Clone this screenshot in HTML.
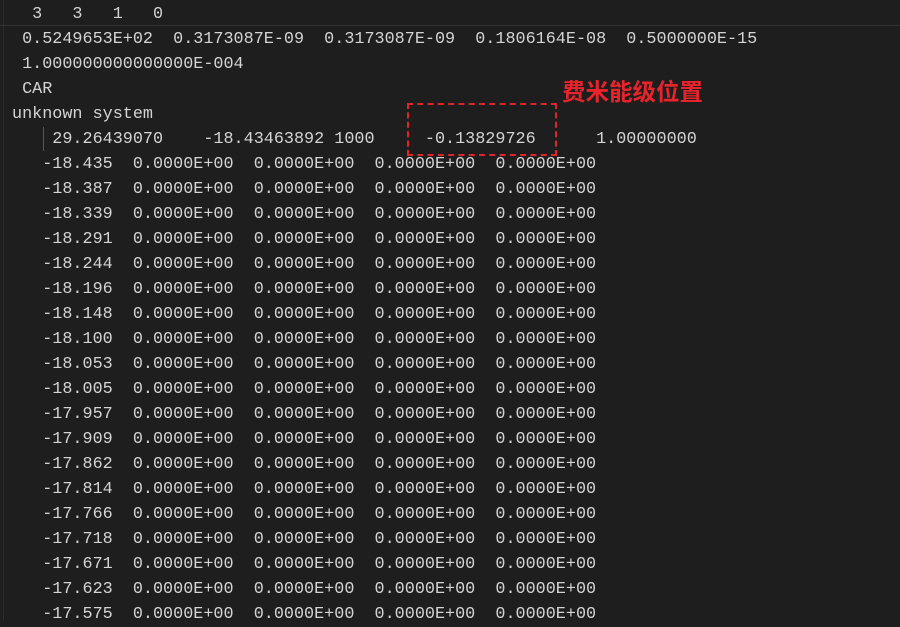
<!DOCTYPE html>
<html><head><meta charset="utf-8">
<style>
html,body{margin:0;padding:0;background:#1e1e1e;width:900px;height:620px;overflow:hidden;}
pre{position:absolute;left:12px;top:2px;margin:0;font-family:"Liberation Mono","DejaVu Sans Mono",monospace;font-size:16.8px;line-height:25px;color:#d4d4d4;white-space:pre;}
.sep{position:absolute;left:0;top:25px;width:900px;height:1px;background:#333;}
.lb{position:absolute;left:3px;top:0;width:1px;height:620px;background:#2c2c2c;}
.guide{position:absolute;left:43px;top:127px;width:1px;height:24px;background:#555;}
.box{position:absolute;left:407px;top:103px;width:146px;height:49px;border:2.5px dashed #e0242c;}
.lab{position:absolute;left:562px;top:78px;font-family:"Liberation Sans","Noto Sans CJK SC",sans-serif;font-weight:bold;font-size:23.5px;color:#e8232b;line-height:28px;}
</style></head><body>
<div class="lb"></div>
<div class="sep"></div>
<div class="guide"></div>
<pre>  3   3   1   0
 0.5249653E+02  0.3173087E-09  0.3173087E-09  0.1806164E-08  0.5000000E-15
 1.000000000000000E-004
 CAR
unknown system
    29.26439070    -18.43463892 1000     -0.13829726      1.00000000
   -18.435  0.0000E+00  0.0000E+00  0.0000E+00  0.0000E+00
   -18.387  0.0000E+00  0.0000E+00  0.0000E+00  0.0000E+00
   -18.339  0.0000E+00  0.0000E+00  0.0000E+00  0.0000E+00
   -18.291  0.0000E+00  0.0000E+00  0.0000E+00  0.0000E+00
   -18.244  0.0000E+00  0.0000E+00  0.0000E+00  0.0000E+00
   -18.196  0.0000E+00  0.0000E+00  0.0000E+00  0.0000E+00
   -18.148  0.0000E+00  0.0000E+00  0.0000E+00  0.0000E+00
   -18.100  0.0000E+00  0.0000E+00  0.0000E+00  0.0000E+00
   -18.053  0.0000E+00  0.0000E+00  0.0000E+00  0.0000E+00
   -18.005  0.0000E+00  0.0000E+00  0.0000E+00  0.0000E+00
   -17.957  0.0000E+00  0.0000E+00  0.0000E+00  0.0000E+00
   -17.909  0.0000E+00  0.0000E+00  0.0000E+00  0.0000E+00
   -17.862  0.0000E+00  0.0000E+00  0.0000E+00  0.0000E+00
   -17.814  0.0000E+00  0.0000E+00  0.0000E+00  0.0000E+00
   -17.766  0.0000E+00  0.0000E+00  0.0000E+00  0.0000E+00
   -17.718  0.0000E+00  0.0000E+00  0.0000E+00  0.0000E+00
   -17.671  0.0000E+00  0.0000E+00  0.0000E+00  0.0000E+00
   -17.623  0.0000E+00  0.0000E+00  0.0000E+00  0.0000E+00
   -17.575  0.0000E+00  0.0000E+00  0.0000E+00  0.0000E+00</pre>
<div class="box"></div>
<div class="lab">费米能级位置</div>
</body></html>
